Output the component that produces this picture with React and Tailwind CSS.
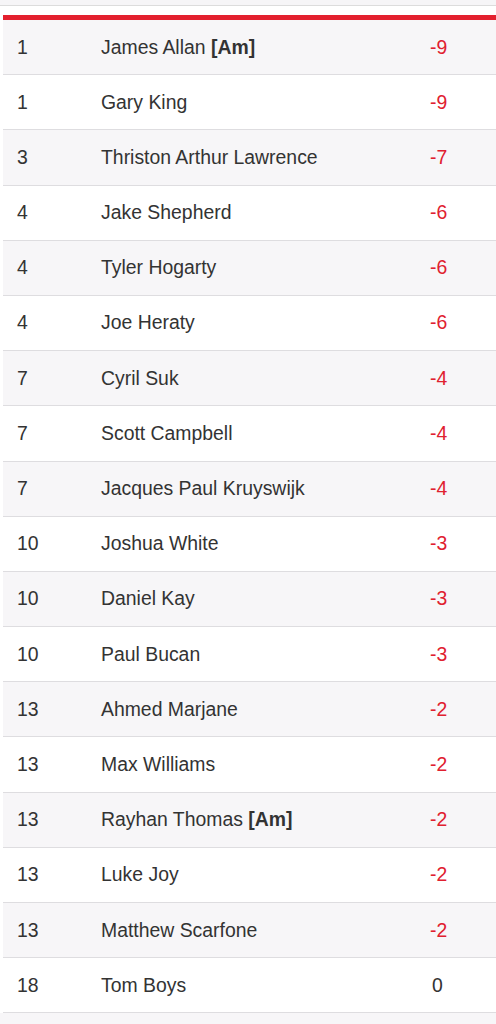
const players = [
  { pos: "1", name: "James Allan", am: true, score: "-9" },
  { pos: "1", name: "Gary King", score: "-9" },
  { pos: "3", name: "Thriston Arthur Lawrence", score: "-7" },
  { pos: "4", name: "Jake Shepherd", score: "-6" },
  { pos: "4", name: "Tyler Hogarty", score: "-6" },
  { pos: "4", name: "Joe Heraty", score: "-6" },
  { pos: "7", name: "Cyril Suk", score: "-4" },
  { pos: "7", name: "Scott Campbell", score: "-4" },
  { pos: "7", name: "Jacques Paul Kruyswijk", score: "-4" },
  { pos: "10", name: "Joshua White", score: "-3" },
  { pos: "10", name: "Daniel Kay", score: "-3" },
  { pos: "10", name: "Paul Bucan", score: "-3" },
  { pos: "13", name: "Ahmed Marjane", score: "-2" },
  { pos: "13", name: "Max Williams", score: "-2" },
  { pos: "13", name: "Rayhan Thomas", am: true, score: "-2" },
  { pos: "13", name: "Luke Joy", score: "-2" },
  { pos: "13", name: "Matthew Scarfone", score: "-2" },
  { pos: "18", name: "Tom Boys", score: "0" },
];

export default function App() {
  return (
    <div className="w-[496px] h-[1024px] bg-[#f7f6f8] overflow-hidden font-[family-name:'Liberation_Sans',Arial,sans-serif]">
      <div className="h-[6px] bg-[#f6f5f7] border-b border-[#dcdcdc]" />
      <div className="bg-white pl-[3px] pt-[9px]">
        <div className="h-[5px] bg-[#e3202e]" />
        {players.map((p, i) => (
          <div
            key={i}
            className={`h-[55.2px] flex items-center border-b border-[#dedde0] text-[19.4px] text-[#333] ${
              i % 2 === 0 ? "bg-[#f7f6f8]" : "bg-white"
            }`}
          >
            <span className="w-[98px] pl-[14px]">{p.pos}</span>
            <span className="flex-1">
              {p.name}
              {p.am && <b className="font-bold"> [Am]</b>}
            </span>
            <span className={`w-[66px] ${p.score === "0" ? "text-[#333] pl-[2px]" : "text-[#e0202f]"}`}>
              {p.score}
            </span>
          </div>
        ))}
      </div>
    </div>
  );
}
